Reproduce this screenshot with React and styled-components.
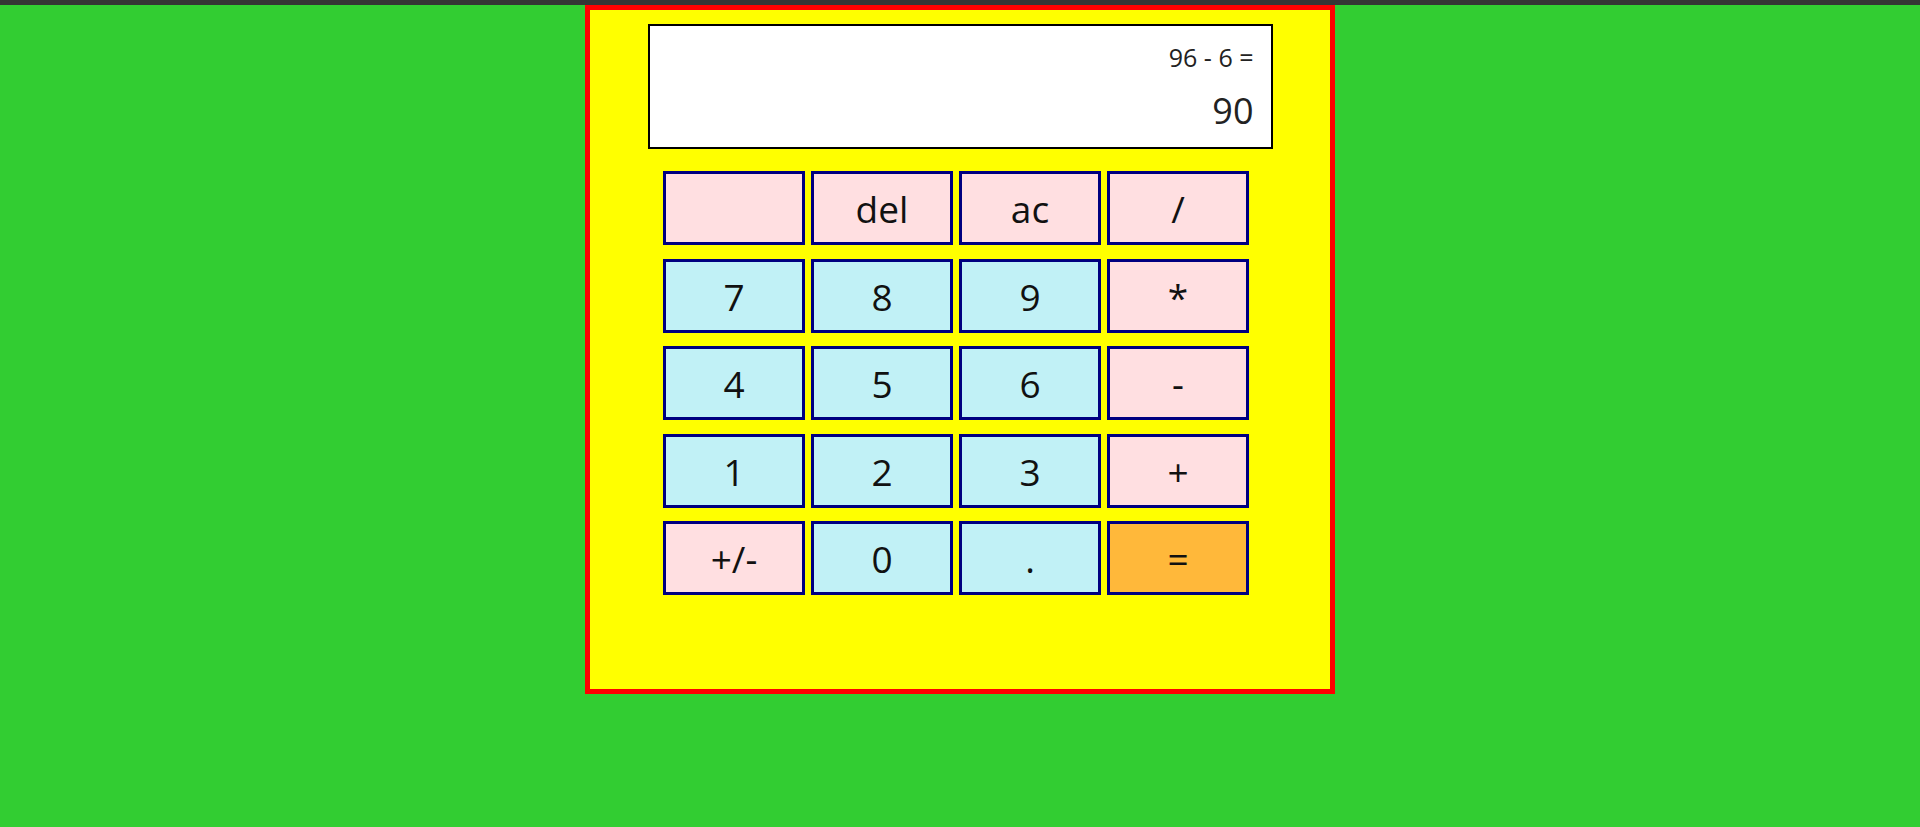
import React from "react";
import styled, { createGlobalStyle } from "styled-components";

const GlobalStyle = createGlobalStyle`
  html, body {
    margin: 0;
    padding: 0;
    background-color: limegreen;
    font-family: "Open Sans", "Noto Sans", sans-serif;
  }
  * {
    box-sizing: border-box;
  }
`;

const keys = [
  { label: "", kind: "op" },
  { label: "del", kind: "op" },
  { label: "ac", kind: "op" },
  { label: "/", kind: "op" },
  { label: "7", kind: "num" },
  { label: "8", kind: "num" },
  { label: "9", kind: "num" },
  { label: "*", kind: "op" },
  { label: "4", kind: "num" },
  { label: "5", kind: "num" },
  { label: "6", kind: "num" },
  { label: "-", kind: "op" },
  { label: "1", kind: "num" },
  { label: "2", kind: "num" },
  { label: "3", kind: "num" },
  { label: "+", kind: "op" },
  { label: "+/-", kind: "op" },
  { label: "0", kind: "num" },
  { label: ".", kind: "num" },
  { label: "=", kind: "equals" },
];

const colors = {
  op: "#ffdfe1",
  num: "#c1f1f6",
  equals: "#ffb83a",
};

const App = () => {
  return (
    <Page>
      <GlobalStyle />
      <TopBar />
      <Calculator>
        <Display>
          <Expression>96 - 6 =</Expression>
          <Result>90</Result>
        </Display>
        <KeypadWrap>
          <Keypad>
            {keys.map((k, i) => (
              <Key key={i} kind={k.kind}>
                {k.label}
              </Key>
            ))}
          </Keypad>
        </KeypadWrap>
      </Calculator>
    </Page>
  );
};

export default App;

const Page = styled.div`
  min-height: 827px;
  background-color: limegreen;
`;
const TopBar = styled.div`
  height: 5px;
  background-color: #353535;
`;
const Calculator = styled.div`
  width: 750px;
  height: 689px;
  margin: 0 auto;
  background-color: yellow;
  border: 5px solid red;
  padding-top: 14px;
  display: flex;
  flex-direction: column;
  align-items: center;
`;
const Display = styled.div`
  width: 625px;
  height: 125px;
  background-color: #fff;
  border: 2px solid #000;
  padding: 15px 17px 0 17px;
  display: flex;
  flex-direction: column;
  align-items: flex-end;
  color: #222;
`;
const Expression = styled.div`
  font-size: 25px;
  line-height: 33px;
`;
const Result = styled.div`
  margin-top: 12px;
  font-size: 36px;
  line-height: 49px;
`;
const KeypadWrap = styled.div`
  width: 100%;
  display: flex;
  justify-content: center;
  padding-right: 8px;
  margin-top: 22px;
`;
const Keypad = styled.div`
  display: grid;
  grid-template-columns: repeat(4, 142px);
  grid-auto-rows: 74px;
  column-gap: 6px;
  row-gap: 13.5px;
`;
const Key = styled.button`
  font-family: "Open Sans", "Noto Sans", sans-serif;
  font-size: 37px;
  color: #111;
  background-color: ${(p) => colors[p.kind]};
  border: 3px solid navy;
  padding: 1px 0 0;
  cursor: pointer;
  display: flex;
  align-items: center;
  justify-content: center;
`;
